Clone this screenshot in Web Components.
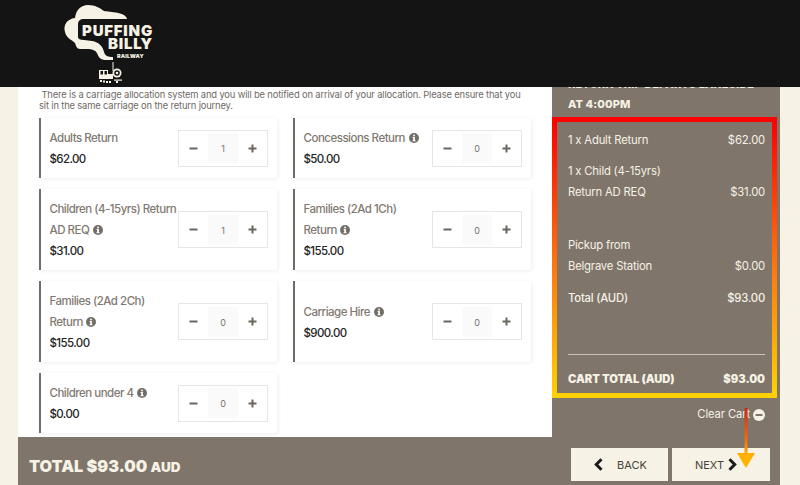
<!DOCTYPE html>
<html lang="en">
<head>
<meta charset="utf-8">
<title>Puffing Billy Railway</title>
<style>
    html, body {
        margin: 0;
        height: 485px;
        overflow: hidden;
        background: #f6f2e5;
        font-family: "Inter", "Liberation Sans", sans-serif;
    }
</style>
</head>
<body>
<pb-app></pb-app>
<script>
class PbLogo extends HTMLElement {
    constructor() {
        super();
        this.attachShadow({ mode: 'open' });
        this.shadowRoot.innerHTML = `
        <style>
            :host { display: block; position: relative; width: 100px; height: 87px; }
            svg { display: block; }
            /* wordmark sits on top of the smoke cloud */
            #word {
                position: absolute;
                left: 16px;
                top: 24px;
                width: 77px;
                text-align: right;
                font-weight: 900;
                font-size: 15px;
                line-height: 13px;
                letter-spacing: 0.8px;
                color: #f6f2e5;
            }
            #sub {
                position: absolute;
                left: 57px;
                top: 53px;
                font-weight: 900;
                font-size: 5.4px;
                line-height: 6px;
                letter-spacing: 0.2px;
                color: #f6f2e5;
            }
        </style>
        <svg width="100" height="87" viewBox="60 0 100 87">
            <path fill="#f6f2e5" d="M75 18 C76 10 81 5 88 5 C95 5 100 8 104 11 C110 12 126 12 127 19 L84 19 C80 19 78 21 78 24 L78 37 C78 39 80 40 84 40 L92 41 C99 42 103 47 104 52 C105 56 108 57 113 57 L113 60 L105 60 C100 60 98 56 97 53 C95 50 92 49 87 49 L80 49 C77 49 76 46 75 43 C72 40 66 38 65 32 C63 25 67 19 75 18 Z"/>
            <g fill="#f6f2e5">
                <rect x="112.5" y="62" width="1" height="9"/>
                <rect x="99" y="70" width="9" height="9"/>
                <rect x="108" y="74" width="5" height="5"/>
                <circle cx="117" cy="73" r="4.5"/>
                <rect x="100" y="80" width="2" height="2"/>
                <rect x="103" y="80.5" width="2" height="2"/>
                <rect x="106" y="81" width="2" height="2"/>
                <rect x="109" y="81" width="2" height="2"/>
                <rect x="114" y="79.5" width="8" height="1.2"/>
                <rect x="116" y="81" width="2" height="2"/>
            </g>
            <circle cx="117" cy="73" r="2.8" fill="#141414"/>
            <circle cx="117" cy="73" r="1.3" fill="#f6f2e5"/>
            <rect x="100.5" y="71" width="2.5" height="3.5" fill="#141414"/>
            <rect x="104.5" y="71" width="2.5" height="3.5" fill="#141414"/>
        </svg>
        <div id="word">PUFFING BILLY</div>
        <div id="sub">RAILWAY</div>
        `;
    }
}

class PbHeader extends HTMLElement {
    constructor() {
        super();
        this.attachShadow({ mode: 'open' });
        this.shadowRoot.innerHTML = `
        <style>
            :host {
                position: fixed;
                top: 0;
                left: 0;
                width: 100%;
                height: 87px;
                background: #141414;
                z-index: 10;
                display: flex;
                padding-left: 60px;
                box-sizing: border-box;
            }
        </style>
        <pb-logo></pb-logo>
        `;
    }
}

class PbStepper extends HTMLElement {
    constructor() {
        super();
        this.attachShadow({ mode: 'open' });
    }
    connectedCallback() {
        this.shadowRoot.innerHTML = `
        <style>
            :host {
                display: flex;
                flex: none;
                align-items: center;
                width: 90px;
                height: 37px;
                box-sizing: border-box;
                border: 1px solid #e6e6e6;
                background: #fff;
            }
            span.btn {
                flex: 1;
                display: flex;
                align-items: center;
                justify-content: center;
            }
            output {
                width: 30px;
                height: 30px;
                background: #fafafa;
                color: #77716b;
                font-size: 9px;
                display: flex;
                align-items: center;
                justify-content: center;
                padding-top: 1px;
                box-sizing: border-box;
            }
            svg { display: block; }
        </style>
        <span class="btn"><svg width="9" height="9" viewBox="0 0 9 9"><rect x="0.5" y="3.5" width="8" height="2" fill="#6b6660"/></svg></span>
        <output>${this.getAttribute('value')}</output>
        <span class="btn"><svg width="9" height="9" viewBox="0 0 9 9"><path d="M0.5 3.5h3v-3h2v3h3v2h-3v3h-2v-3h-3z" fill="#6b6660"/></svg></span>
        `;
    }
}

class PbInfo extends HTMLElement {
    constructor() {
        super();
        this.attachShadow({ mode: 'open' });
        this.shadowRoot.innerHTML = `
        <style>
            :host { display: inline-block; vertical-align: -1px; margin-left: 1px; white-space: normal; }
            svg { display: block; }
        </style>
        <svg width="10" height="10" viewBox="0 0 10 10">
            <circle cx="5" cy="5" r="5" fill="#746e68"/>
            <rect x="4.2" y="1.7" width="1.7" height="1.6" fill="#fff"/>
            <path d="M3.6 4h2.3v3.3h.7v1H3.5v-1h.7V5h-.6z" fill="#fff"/>
        </svg>
        `;
    }
}

class PbTicket extends HTMLElement {
    constructor() {
        super();
        this.attachShadow({ mode: 'open' });
    }
    connectedCallback() {
        const info = this.hasAttribute('info') ? ' <pb-info></pb-info>' : '';
        this.shadowRoot.innerHTML = `
        <style>
            :host {
                display: flex;
                align-items: center;
                justify-content: space-between;
                box-sizing: border-box;
                padding: 9px 9px 9px 8.5px;
                background: #fff;
                border-left: 2px solid #716c66;
                box-shadow: 1px 1px 4px rgba(0, 0, 0, 0.07);
                border-radius: 0 3px 3px 0;
                line-height: 21px;
                font-size: 11.5px;
            }
            #text { width: 127px; padding-top: 2px; }
            #label { color: #7f7972; font-weight: 500; letter-spacing: -0.5px; margin-right: -2px; white-space: pre-line; }
            #price { color: #232323; font-weight: 500; letter-spacing: -0.6px; }
        </style>
        <div id="text">
            <div id="label">${this.getAttribute('label')}${info}</div>
            <div id="price">${this.getAttribute('price')}</div>
        </div>
        <pb-stepper value="${this.getAttribute('qty')}"></pb-stepper>
        `;
    }
}

class PbTickets extends HTMLElement {
    constructor() {
        super();
        this.attachShadow({ mode: 'open' });
        this.shadowRoot.innerHTML = `
        <style>
            :host {
                display: block;
                background: #fff;
                padding: 89px 21px 0 21px;
                color: #6f6a65;
            }
            p {
                margin: 0 0 7px 0;
                font-size: 9.4px;
                line-height: 11px;
                letter-spacing: -0.16px;
                width: 490px;
            }
            #grid {
                display: grid;
                grid-template-columns: 238px 238px;
                grid-template-rows: 60px 81px 81px 60px;
                column-gap: 16px;
                row-gap: 11px;
            }
        </style>
        <p>&nbsp;There is a carriage allocation system and you will be notified on arrival of your allocation. Please ensure that you sit in the same carriage on the return journey.</p>
        <div id="grid"><slot></slot></div>
        `;
    }
}

class PbCartRow extends HTMLElement {
    constructor() {
        super();
        this.attachShadow({ mode: 'open' });
        this.shadowRoot.innerHTML = `
        <style>
            :host {
                display: flex;
                justify-content: space-between;
                line-height: 21px;
                font-size: 11.3px;
                letter-spacing: -0.2px;
                color: #f6f2e5;
            }
        </style>
        <span><slot></slot></span>
        <span><slot name="price"></slot></span>
        `;
    }
}

class PbCart extends HTMLElement {
    constructor() {
        super();
        this.attachShadow({ mode: 'open' });
        this.shadowRoot.innerHTML = `
        <style>
            :host {
                display: block;
                background: #7f756b;
                color: #f6f2e5;
                padding-top: 75px;
                box-sizing: border-box;
            }
            h2 {
                margin: 0 0 3px 16px;
                font-size: 11px;
                font-weight: 800;
                line-height: 19.5px;
                letter-spacing: 0.1px;
            }
            #box {
                width: 225px;
                height: 281px;
                box-sizing: border-box;
                border: 5px solid;
                border-image: linear-gradient(to bottom, #ff0000, #ff7a0c 55%, #ffd000) 1;
                padding: 8px 7px 0 11px;
            }
            .gap1 { margin-top: 10px; }
            .gap2 { margin-top: 32px; }
            .gap3 { margin-top: 11px; }
            .mid { font-weight: 500; }
            hr {
                border: 0;
                border-top: 1px solid #c9c4bd;
                margin: 45px 0 14px;
            }
            .strong { font-weight: 900; letter-spacing: -0.05px; font-size: 11.2px; }
            #clear {
                display: flex;
                justify-content: flex-end;
                align-items: center;
                gap: 3px;
                padding-right: 15px;
                margin-top: 6px;
                font-size: 11.2px;
                letter-spacing: -0.1px;
                line-height: 21px;
            }
            svg { display: block; }
        </style>
        <h2>RETURN TRIP DEPARTS LAKESIDE<br>AT 4:00PM</h2>
        <div id="box">
            <pb-cart-row>1 x Adult Return<span slot="price">$62.00</span></pb-cart-row>
            <pb-cart-row class="gap1">1 x Child (4-15yrs)</pb-cart-row>
            <pb-cart-row>Return AD REQ<span slot="price">$31.00</span></pb-cart-row>
            <pb-cart-row class="gap2">Pickup from</pb-cart-row>
            <pb-cart-row>Belgrave Station<span slot="price">$0.00</span></pb-cart-row>
            <pb-cart-row class="gap3 mid">Total (AUD)<span slot="price">$93.00</span></pb-cart-row>
            <hr>
            <pb-cart-row class="strong">CART TOTAL (AUD)<span slot="price">$93.00</span></pb-cart-row>
        </div>
        <div id="clear">Clear Cart
            <svg width="12" height="12" viewBox="0 0 12 12"><circle cx="6" cy="6" r="6" fill="#f6f2e5"/><rect x="2.5" y="5" width="7" height="2" fill="#7f756b"/></svg>
        </div>
        `;
    }
}

class PbNavButton extends HTMLElement {
    constructor() {
        super();
        this.attachShadow({ mode: 'open' });
        this.shadowRoot.innerHTML = `
        <style>
            :host {
                display: flex;
                align-items: center;
                justify-content: center;
                gap: 14px;
                width: 97px;
                height: 33px;
                padding-left: 2px;
                box-sizing: border-box;
                background: #f6f2e5;
                color: #45423d;
                font-size: 11px;
            }
            :host([dir-next]) { gap: 4px; width: 98px; padding: 0 10px 0 0; }
            svg { display: block; }
        </style>
        <slot name="before"></slot><slot></slot><slot name="after"></slot>
        `;
    }
}

class PbFooter extends HTMLElement {
    constructor() {
        super();
        this.attachShadow({ mode: 'open' });
        this.shadowRoot.innerHTML = `
        <style>
            :host {
                display: flex;
                justify-content: space-between;
                background: #7f756b;
                padding: 11px 10px 4px 11px;
                box-sizing: border-box;
            }
            #total {
                color: #f6f2e5;
                font-size: 16.2px;
                font-weight: 900;
                line-height: 36px;
            }
            #total small { font-size: 13.5px; }
            #nav { display: flex; gap: 4px; }
            svg { display: block; }
        </style>
        <div id="total">TOTAL $93.00 <small>AUD</small></div>
        <div id="nav">
            <pb-nav-button>
                <svg slot="before" width="9" height="13" viewBox="0 0 9 13"><path d="M7.5 1.3 2.3 6.5 7.5 11.7" fill="none" stroke="#1c1b19" stroke-width="3"/></svg>
                BACK
            </pb-nav-button>
            <pb-nav-button dir-next>
                NEXT
                <svg slot="after" width="9" height="13" viewBox="0 0 9 13"><path d="M1.5 1.3 6.7 6.5 1.5 11.7" fill="none" stroke="#1c1b19" stroke-width="3"/></svg>
            </pb-nav-button>
        </div>
        `;
    }
}

// annotation arrow drawn over the screenshot, it points at the next button
class PbArrow extends HTMLElement {
    constructor() {
        super();
        this.attachShadow({ mode: 'open' });
        this.shadowRoot.innerHTML = `
        <style>
            :host { position: fixed; left: 737px; top: 408px; width: 18px; height: 60px; z-index: 20; }
            svg { display: block; }
        </style>
        <svg width="18" height="60" viewBox="0 0 18 60">
            <defs>
                <linearGradient id="g" gradientUnits="userSpaceOnUse" x1="0" y1="0" x2="0" y2="60">
                    <stop offset="0" stop-color="#c9281d"/>
                    <stop offset="0.55" stop-color="#f0730f"/>
                    <stop offset="0.78" stop-color="#ffb000"/>
                    <stop offset="1" stop-color="#ffb400"/>
                </linearGradient>
            </defs>
            <path d="M7.5 0h3v45h7.5l-9 15-9-15h7.5z" fill="url(#g)"/>
        </svg>
        `;
    }
}

class PbApp extends HTMLElement {
    constructor() {
        super();
        this.attachShadow({ mode: 'open' });
        this.shadowRoot.innerHTML = `
        <style>
            :host {
                display: grid;
                grid-template-columns: 534px 228px;
                grid-template-rows: 437px 48px;
                padding-left: 18px;
                width: 800px;
                height: 485px;
                box-sizing: border-box;
                overflow: hidden;
            }
            pb-footer { grid-column: 1 / span 2; }
        </style>
        <pb-header></pb-header>
        <pb-tickets>
            <pb-ticket label="Adults Return" price="$62.00" qty="1"></pb-ticket>
            <pb-ticket label="Concessions Return" price="$50.00" qty="0" info></pb-ticket>
            <pb-ticket label="Children (4-15yrs) Return&#10;AD REQ" price="$31.00" qty="1" info></pb-ticket>
            <pb-ticket label="Families (2Ad 1Ch)&#10;Return" price="$155.00" qty="0" info></pb-ticket>
            <pb-ticket label="Families (2Ad 2Ch)&#10;Return" price="$155.00" qty="0" info></pb-ticket>
            <pb-ticket label="Carriage Hire" price="$900.00" qty="0" info></pb-ticket>
            <pb-ticket label="Children under 4" price="$0.00" qty="0" info></pb-ticket>
        </pb-tickets>
        <pb-cart></pb-cart>
        <pb-footer></pb-footer>
        <pb-arrow></pb-arrow>
        `;
    }
}

customElements.define('pb-logo', PbLogo);
customElements.define('pb-header', PbHeader);
customElements.define('pb-stepper', PbStepper);
customElements.define('pb-info', PbInfo);
customElements.define('pb-ticket', PbTicket);
customElements.define('pb-tickets', PbTickets);
customElements.define('pb-cart-row', PbCartRow);
customElements.define('pb-cart', PbCart);
customElements.define('pb-nav-button', PbNavButton);
customElements.define('pb-footer', PbFooter);
customElements.define('pb-arrow', PbArrow);
customElements.define('pb-app', PbApp);
</script>
</body>
</html>
